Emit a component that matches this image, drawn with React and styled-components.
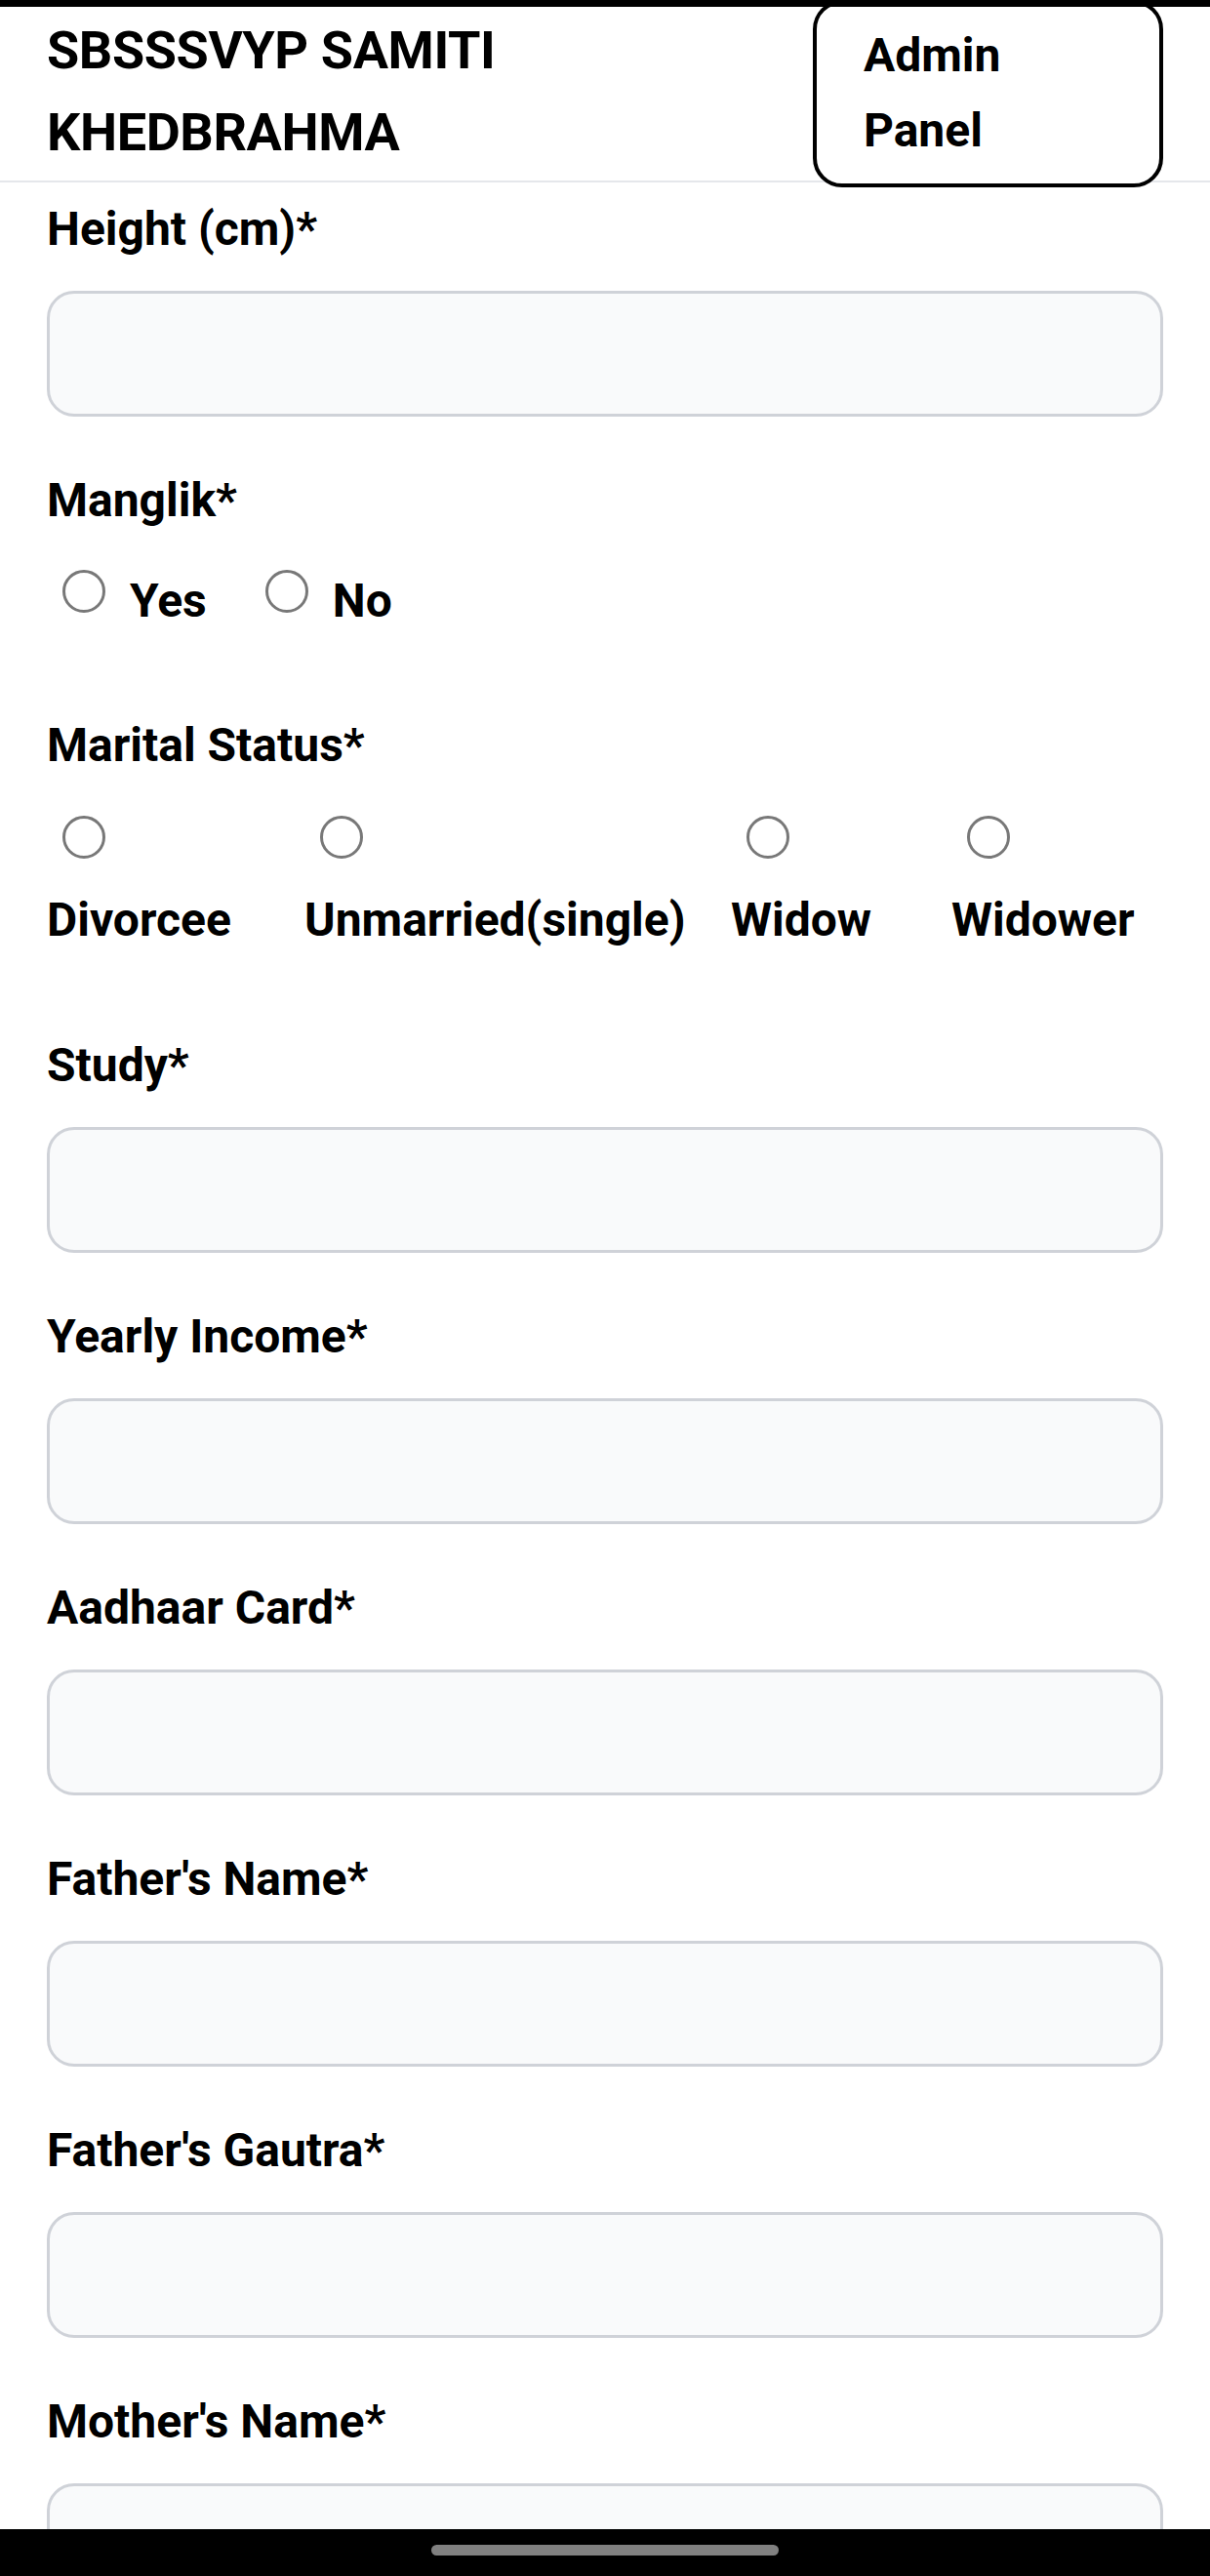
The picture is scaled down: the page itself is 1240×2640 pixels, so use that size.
import React from "react";
import styled, { createGlobalStyle } from "styled-components";

const GlobalStyle = createGlobalStyle`
  html, body {
    margin: 0;
    padding: 0;
    background: #ffffff;
  }
  body {
    font-family: Roboto, "Noto Sans", "Liberation Sans", Arial, sans-serif;
    color: #000000;
  }
  * { box-sizing: border-box; }
`;

const StatusStrip = styled.div`
  position: fixed;
  top: 0;
  left: 0;
  right: 0;
  height: 7px;
  background: #000;
  z-index: 10;
`;

const NavBar = styled.div`
  position: fixed;
  left: 0;
  right: 0;
  bottom: 0;
  height: 48px;
  background: #000;
  display: flex;
  justify-content: center;
  padding-top: 16px;
  z-index: 10;
`;

const NavPill = styled.div`
  width: 356px;
  height: 11px;
  border-radius: 6px;
  background: #808080;
`;

const Page = styled.div`
  width: 1240px;
`;

const Header = styled.header`
  height: 187px;
  display: flex;
  justify-content: space-between;
  align-items: flex-start;
  padding: 0 48px;
  border-bottom: 2px solid #e5e7eb;
`;

const Title = styled.h1`
  margin: 0;
  padding-top: 10px;
  font-size: 54px;
  line-height: 84px;
  font-weight: 700;
  letter-spacing: -0.4px;
  width: 520px;
`;

const AdminButton = styled.div`
  flex: none;
  width: 359px;
  height: 192px;
  padding: 14px 0 0 48px;
  border: 4px solid #000;
  border-radius: 30px;
  background: #fff;
  color: #000;
  font-size: 48px;
  line-height: 77px;
  font-weight: 700;
  position: relative;
  z-index: 1;
  cursor: pointer;
`;

const Form = styled.form`
  padding: 13px 48px 0 48px;
  display: flex;
  flex-direction: column;
`;

const Field = styled.div`
  display: flex;
  flex-direction: column;
  margin-bottom: ${(p) => p.$gap || 51}px;
`;

const Label = styled.label`
  font-size: 48px;
  line-height: 70px;
  font-weight: 700;
  margin-bottom: ${(p) => p.$gap ?? 28}px;
`;

const TextInput = styled.input`
  width: 100%;
  height: 129px;
  border: 3px solid #cfd2d8;
  border-radius: 28px;
  background: #f9fafb;
  font-family: inherit;
  font-size: 47px;
  padding: 0 30px;
  outline: none;
`;

const Radio = styled.input.attrs({ type: "radio" })`
  appearance: none;
  -webkit-appearance: none;
  width: 44px;
  height: 44px;
  border: 3px solid #787878;
  border-radius: 50%;
  background: #fff;
  margin: ${(p) => p.$m};
  flex: none;
`;

const InlineRow = styled.div`
  display: flex;
  align-items: flex-start;
  gap: 60px;
  height: 70px;
`;

const InlineOption = styled.label`
  display: flex;
  align-items: flex-start;
  font-size: 48px;
  line-height: 70px;
  font-weight: 700;
`;

const StackRow = styled.div`
  display: grid;
  grid-template-columns: 264px 437px 226px auto;
`;

const StackOption = styled.label`
  display: flex;
  flex-direction: column;
  align-items: flex-start;
  font-size: 48px;
  line-height: 70px;
  font-weight: 700;
  white-space: nowrap;
`;

const textFields = ["Study*", "Yearly Income*", "Aadhaar Card*", "Father's Name*", "Father's Gautra*", "Mother's Name*"];

export default function App() {
  return (
    <Page>
      <GlobalStyle />
      <StatusStrip />
      <Header>
        <Title>SBSSSVYP SAMITI KHEDBRAHMA</Title>
        <AdminButton role="button">
          Admin
          <br />
          Panel
        </AdminButton>
      </Header>
      <Form onSubmit={(e) => e.preventDefault()}>
        <Field>
          <Label>Height (cm)*</Label>
          <TextInput type="text" />
        </Field>

        <Field $gap={78}>
          <Label $gap={33}>Manglik*</Label>
          <InlineRow>
            <InlineOption>
              <Radio name="manglik" $m="3px 25px 0 16px" />
              Yes
            </InlineOption>
            <InlineOption>
              <Radio name="manglik" $m="3px 25px 0 0" />
              No
            </InlineOption>
          </InlineRow>
        </Field>

        <Field $gap={79}>
          <Label $gap={28}>Marital Status*</Label>
          <StackRow>
            {["Divorcee", "Unmarried(single)", "Widow", "Widower"].map((o) => (
              <StackOption key={o}>
                <Radio name="marital" $m="9px 0 28px 16px" />
                {o}
              </StackOption>
            ))}
          </StackRow>
        </Field>

        {textFields.map((f) => (
          <Field key={f}>
            <Label>{f}</Label>
            <TextInput type="text" />
          </Field>
        ))}
      </Form>
      <NavBar>
        <NavPill />
      </NavBar>
    </Page>
  );
}
